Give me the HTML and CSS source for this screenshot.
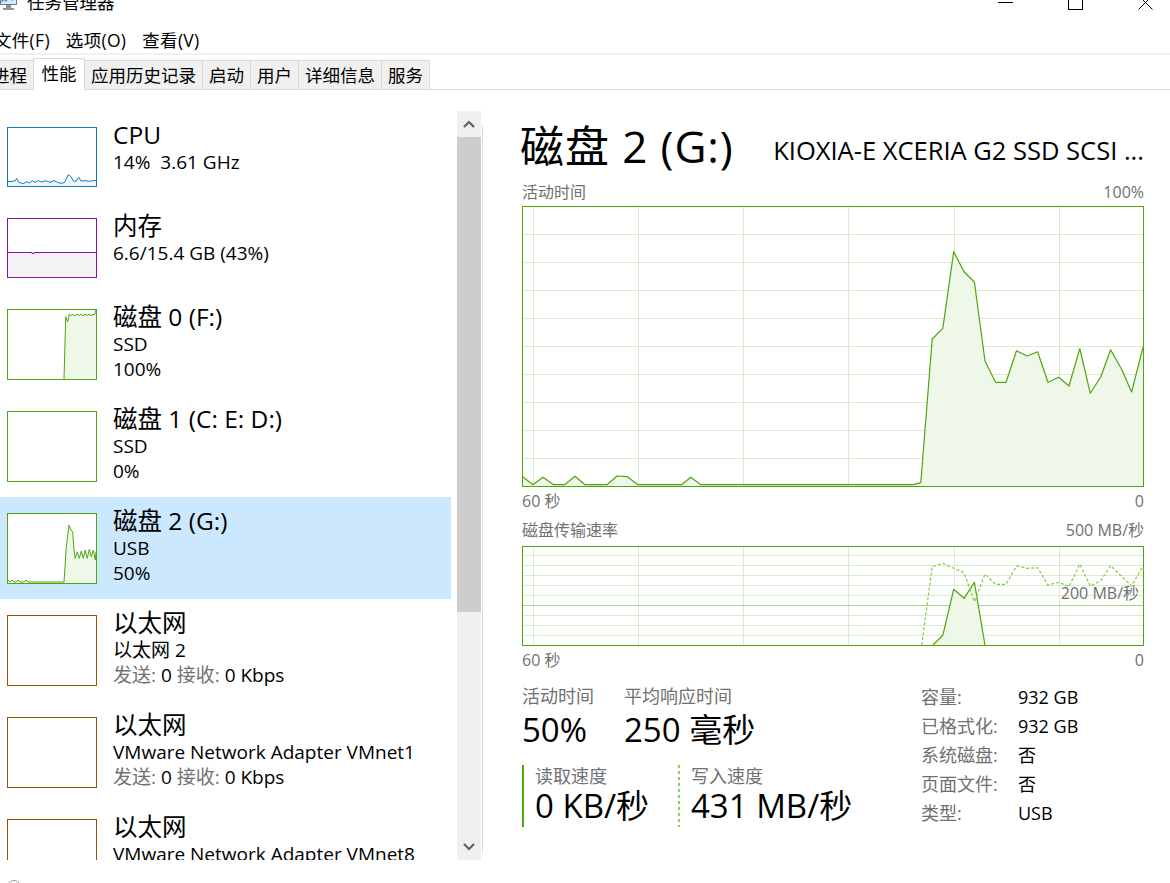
FILE: index.html
```html
<!DOCTYPE html>
<html lang="zh-CN">
<head>
<meta charset="utf-8">
<title>任务管理器</title>
<link rel="stylesheet" href="styles.css">
</head>
<body>
<div class="window">
  <header class="titlebar">
    <div class="app">
      <svg class="app-icon" width="20" height="20" viewBox="0 0 20 20">
        <rect x="1.5" y="1.5" width="16" height="11" fill="#dbe9f4" stroke="#6f7d88"/>
        <polyline points="2.5,10 5,7 7,9 10,4 13,8 16.5,5.5" fill="none" stroke="#2f86c8" stroke-width="1.2"/>
        <rect x="7" y="13" width="5" height="3" fill="#8a949c"/>
        <rect x="4" y="16" width="11" height="2" fill="#8a949c"/>
      </svg>
      <span class="app-name">任务管理器</span>
    </div>
    <div class="controls">
      <span class="ctl"><svg width="15" height="15" viewBox="0 0 15 15"><path d="M0 7.5H15" stroke="#000"/></svg></span>
      <span class="ctl"><svg width="15" height="15" viewBox="0 0 15 15"><rect x="0.5" y="0.5" width="14" height="14" fill="none" stroke="#000"/></svg></span>
      <span class="ctl"><svg width="15" height="15" viewBox="0 0 15 15"><path d="M0.5 0.5L14.5 14.5M14.5 0.5L0.5 14.5" stroke="#000"/></svg></span>
    </div>
  </header>

  <nav class="menubar">
    <span>文件(F)</span>
    <span>选项(O)</span>
    <span>查看(V)</span>
  </nav>

  <div class="tabs">
    <div class="tab">进程</div>
    <div class="tab active">性能</div>
    <div class="tab">应用历史记录</div>
    <div class="tab">启动</div>
    <div class="tab">用户</div>
    <div class="tab">详细信息</div>
    <div class="tab">服务</div>
  </div>

  <main class="perf">
    <aside class="sidebar">
      <div class="list">
        <div class="item short">
          <div class="thumb cpu">
            <svg viewBox="0 0 88 58" preserveAspectRatio="none">
              <path class="fill" d="M0,53.7 L7,53 8.7,50.3 10.7,54.3 15.3,55.7 18.7,53.7 21.3,55 24.3,52.7 27,54.3 30.3,52.7 33.7,54 37.7,52.7 42,54.3 46,52.7 52,55.3 56.3,54.7 60.3,46.7 63,48.7 65.3,53 68,53.3 70.7,49.3 73,53 77,52.7 81.3,53.3 88,52.3 L88,58 L0,58 Z"/>
              <polyline class="ln" points="0,53.7 7,53 8.7,50.3 10.7,54.3 15.3,55.7 18.7,53.7 21.3,55 24.3,52.7 27,54.3 30.3,52.7 33.7,54 37.7,52.7 42,54.3 46,52.7 52,55.3 56.3,54.7 60.3,46.7 63,48.7 65.3,53 68,53.3 70.7,49.3 73,53 77,52.7 81.3,53.3 88,52.3"/>
            </svg>
          </div>
          <div class="info">
            <div class="name">CPU</div>
            <div class="sub">14%&nbsp; 3.61 GHz</div>
          </div>
        </div>

        <div class="item short">
          <div class="thumb mem">
            <svg viewBox="0 0 88 58" preserveAspectRatio="none">
              <path class="fill" d="M0,33 L24,33 24,34 26,34 26,33 88,33 L88,58 L0,58 Z"/>
              <polyline class="ln" points="0,33.5 24,33.5 24,34.5 26,34.5 26,33.5 88,33.5"/>
            </svg>
          </div>
          <div class="info">
            <div class="name">内存</div>
            <div class="sub">6.6/15.4 GB (43%)</div>
          </div>
        </div>

        <div class="item">
          <div class="thumb disk">
            <svg viewBox="0 0 88 69" preserveAspectRatio="none">
              <path class="fill" d="M56,69 L57.7,6.7 59.7,11.7 61.3,4 63,5.5 65,4.5 67,6 69,4.2 71,5.5 73,4 75,5.8 77,4.3 79,5.5 81,4.2 83,5.6 85,4.5 86.5,5 88,0 L88,69 Z"/>
              <polyline class="ln" points="56,69 57.7,6.7 59.7,11.7 61.3,4 63,5.5 65,4.5 67,6 69,4.2 71,5.5 73,4 75,5.8 77,4.3 79,5.5 81,4.2 83,5.6 85,4.5 86.5,5 88,0"/>
            </svg>
          </div>
          <div class="info">
            <div class="name">磁盘 0 (F:)</div>
            <div class="sub">SSD</div>
            <div class="sub">100%</div>
          </div>
        </div>

        <div class="item">
          <div class="thumb disk"></div>
          <div class="info">
            <div class="name">磁盘 1 (C: E: D:)</div>
            <div class="sub">SSD</div>
            <div class="sub">0%</div>
          </div>
        </div>

        <div class="item selected">
          <div class="thumb disk">
            <svg viewBox="0 0 88 69" preserveAspectRatio="none">
              <path class="fill" d="M0,66 L2,68 4,66 6,68 8,68 10,66 12,68 16,68 18,66 20,68 56,68 L58.3,32.7 61,11 63,16 64.7,17.7 66,36 67.3,44.3 69.3,37.7 71.3,44.3 73.3,37 75.3,44.3 77.3,36 79.3,44.3 81.3,35.3 83.3,42.7 85.3,36 87.3,46 88,37.7 L88,69 L0,69 Z"/>
              <polyline class="ln" points="0,66 2,68 4,66 6,68 8,68 10,66 12,68 16,68 18,66 20,68 56,68 58.3,32.7 61,11 63,16 64.7,17.7 66,36 67.3,44.3 69.3,37.7 71.3,44.3 73.3,37 75.3,44.3 77.3,36 79.3,44.3 81.3,35.3 83.3,42.7 85.3,36 87.3,46 88,37.7"/>
            </svg>
          </div>
          <div class="info">
            <div class="name">磁盘 2 (G:)</div>
            <div class="sub">USB</div>
            <div class="sub">50%</div>
          </div>
        </div>

        <div class="item">
          <div class="thumb eth"></div>
          <div class="info">
            <div class="name">以太网</div>
            <div class="sub">以太网 2</div>
            <div class="sub"><span class="g">发送:</span> 0 <span class="g">接收:</span> 0 Kbps</div>
          </div>
        </div>

        <div class="item">
          <div class="thumb eth"></div>
          <div class="info">
            <div class="name">以太网</div>
            <div class="sub">VMware Network Adapter VMnet1</div>
            <div class="sub"><span class="g">发送:</span> 0 <span class="g">接收:</span> 0 Kbps</div>
          </div>
        </div>

        <div class="item">
          <div class="thumb eth"></div>
          <div class="info">
            <div class="name">以太网</div>
            <div class="sub">VMware Network Adapter VMnet8</div>
            <div class="sub"><span class="g">发送:</span> 0 <span class="g">接收:</span> 0 Kbps</div>
          </div>
        </div>
      </div>

      <div class="scrollbar">
        <div class="sb-btn"><svg width="12" height="8" viewBox="0 0 12 8"><polyline points="1,7 6,2 11,7" fill="none" stroke="#606060" stroke-width="2.2"/></svg></div>
        <div class="sb-thumb"></div>
        <div class="sb-track"></div>
        <div class="sb-btn"><svg width="12" height="8" viewBox="0 0 12 8"><polyline points="1,1 6,6 11,1" fill="none" stroke="#606060" stroke-width="2.2"/></svg></div>
      </div>
      <div class="splitter"></div>
    </aside>

    <section class="detail">
      <div class="head">
        <h1 class="title">磁盘 2 (G:)</h1>
        <div class="model">KIOXIA-E XCERIA G2 SSD SCSI ...</div>
      </div>

      <div class="cap"><span>活动时间</span><span>100%</span></div>
      <div class="chart big">
        <svg width="620" height="279" viewBox="0 0 620 279">
          <path class="grid" d="M10.5 0V279M115.5 0V279M220.5 0V279M325.5 0V279M431.5 0V279M536.5 0V279M0 27.5H620M0 55.5H620M0 83.5H620M0 111.5H620M0 139.5H620M0 167.5H620M0 195.5H620M0 223.5H620M0 251.5H620"/>
          <path class="fill" d="M0,270 L10,277.7 20,270.3 30.6,277.7 41.6,277.7 52,269.3 62,277.7 84,277.7 94,269 104.4,269.7 115,277.7 158.4,277.7 167.8,270.3 177.8,277.7 390,277.7 397.8,275.7 409.2,132 419.8,121.3 430.7,44.7 441,64.7 451.4,75 462,154 472.5,175.3 483,175.3 493.5,143.7 504,149 514.6,144.7 525,175.3 535.7,170.3 546,179 556.8,141.7 567.3,186.3 577.8,169.7 587.6,142.7 599,163 608.6,185 620,140.3 L620,279 L0,279 Z"/>
          <polyline class="ln" points="0,270 10,277.7 20,270.3 30.6,277.7 41.6,277.7 52,269.3 62,277.7 84,277.7 94,269 104.4,269.7 115,277.7 158.4,277.7 167.8,270.3 177.8,277.7 390,277.7 397.8,275.7 409.2,132 419.8,121.3 430.7,44.7 441,64.7 451.4,75 462,154 472.5,175.3 483,175.3 493.5,143.7 504,149 514.6,144.7 525,175.3 535.7,170.3 546,179 556.8,141.7 567.3,186.3 577.8,169.7 587.6,142.7 599,163 608.6,185 620,140.3"/>
        </svg>
      </div>
      <div class="axis"><span>60 秒</span><span>0</span></div>

      <div class="cap cap2"><span>磁盘传输速率</span><span>500 MB/秒</span></div>
      <div class="chart small">
        <svg width="620" height="98" viewBox="0 0 620 98">
          <path class="grid" d="M10.5 0V98M115.5 0V98M220.5 0V98M325.5 0V98M431.5 0V98M536.5 0V98M0 8.5H620M0 18.5H620M0 28.5H620M0 38.5H620M0 48.5H620M0 68.5H620M0 78.5H620M0 88.5H620"/>
          <path class="mark" d="M0 58.5H620"/>
          <path class="fill" d="M410,98 L419.8,88.3 430.7,42.3 441,51.3 451.4,35.3 462,98 Z"/>
          <polyline class="ln" points="410,98 419.8,88.3 430.7,42.3 441,51.3 451.4,35.3 462,98"/>
          <polyline class="dash" points="398.7,98 409.2,19.7 419.8,16.3 430.7,21.3 441,25.7 451.4,54.7 462,27 472.5,37.3 483,37.3 493.5,19 504,21.3 514.6,20.7 525,38 535.7,35.3 546,39.7 556.8,17 567.3,39 577.8,33.7 587.6,18.7 599,29.7 608.6,39 620,19"/>
        </svg>
        <span class="mark-label">200 MB/秒</span>
      </div>
      <div class="axis"><span>60 秒</span><span>0</span></div>

      <div class="stats">
        <div class="stats-left">
          <div class="kv-row">
            <div class="kv first"><div class="lbl">活动时间</div><div class="val">50%</div></div>
            <div class="kv"><div class="lbl">平均响应时间</div><div class="val">250 毫秒</div></div>
          </div>
          <div class="rw-row">
            <div class="rw read"><div class="lbl">读取速度</div><div class="val">0 KB/秒</div></div>
            <div class="rw write"><div class="lbl">写入速度</div><div class="val">431 MB/秒</div></div>
          </div>
        </div>
        <dl class="props">
          <dt>容量:</dt><dd>932 GB</dd>
          <dt>已格式化:</dt><dd>932 GB</dd>
          <dt>系统磁盘:</dt><dd>否</dd>
          <dt>页面文件:</dt><dd>否</dd>
          <dt>类型:</dt><dd>USB</dd>
        </dl>
      </div>
    </section>
  </main>

  <footer class="footer"><span class="fewer"></span></footer>
</div>
</body>
</html>
```

FILE: styles.css
```css
* { box-sizing: border-box; }
html, body { margin: 0; padding: 0; }
body {
  width: 1170px;
  height: 883px;
  overflow: hidden;
  background: #fff;
  color: #000;
  font-family: "Open Sans", "Noto Sans CJK SC", sans-serif;
}
.window { width: 1170px; }

/* title bar */
.titlebar {
  display: flex;
  align-items: center;
  justify-content: space-between;
  height: 30px;
  margin-top: -13px;
}
.app { display: flex; align-items: center; }
.app-icon { display: block; margin-left: -1px; }
.app-name { margin-left: 8px; font-size: 17.5px; line-height: 24px; }
.controls { display: flex; margin-right: -10px; }
.ctl {
  width: 70px;
  height: 30px;
  display: flex;
  align-items: center;
  justify-content: center;
}
.ctl svg { display: block; }

/* menu */
.menubar {
  display: flex;
  gap: 16px;
  padding: 11px 0 1px;
  margin-left: -6px;
  font-size: 17.5px;
  line-height: 24px;
  border-bottom: 2px solid #f0f0f0;
}
.menubar span { letter-spacing: 0.3px; }

/* tabs */
.tabs {
  display: flex;
  align-items: flex-end;
  height: 32px;
  margin-top: 3px;
  margin-left: -15px;
  border-bottom: 1px solid #d9d9d9;
  font-size: 17.5px;
}
.tab {
  height: 29px;
  padding: 0 6px;
  margin-left: -1px;
  line-height: 28px;
  background: #f0f0f0;
  border: 1px solid #d9d9d9;
  border-bottom: none;
  white-space: nowrap;
}
.tab:first-child { margin-left: 0; }
.tab.active {
  position: relative;
  z-index: 1;
  height: 32px;
  margin-bottom: -1px;
  padding: 0 7.5px;
  background: #fff;
}

/* main */
.perf { display: flex; padding-top: 21px; }
.sidebar { display: flex; flex: none; }
.list {
  width: 451px;
  height: 749px;
  overflow: hidden;
}
.item {
  display: flex;
  align-items: flex-start;
  height: 102px;
  padding-left: 7px;
}
.item.short { height: 91px; }
.item.selected { background: #cce8ff; }
.thumb {
  flex: none;
  width: 90px;
  height: 71px;
  margin-top: 16px;
  border: 1px solid #4da60c;
  background: #fff;
}
.item.short .thumb { height: 60px; }
.thumb svg { display: block; width: 100%; height: 100%; }
.thumb .ln { fill: none; stroke-width: 1; }
.thumb.cpu { border-color: #117dbb; }
.thumb.cpu .ln { stroke: #117dbb; }
.thumb.cpu .fill { fill: #f1f6fa; }
.thumb.mem { border-color: #8b12ae; }
.thumb.mem .ln { stroke: #8b12ae; }
.thumb.mem .fill { fill: #f4f2f4; }
.thumb.disk .ln { stroke: #4da60c; }
.thumb.disk .fill { fill: #eff7e9; }
.thumb.eth { border-color: #a74f01; }

.info { margin-left: 16px; padding-top: 9px; white-space: nowrap; }
.name { font-size: 24.5px; line-height: 30px; }
.sub { font-size: 19px; line-height: 24.5px; }
.g { color: #707070; }

.scrollbar {
  display: flex;
  flex-direction: column;
  width: 24px;
  height: 749px;
  margin-left: 6px;
  background: #f0f0f0;
}
.sb-btn {
  height: 26px;
  display: flex;
  align-items: center;
  justify-content: center;
}
.sb-btn svg { display: block; }
.sb-thumb { height: 475px; background: #cdcdcd; }
.sb-track { flex: 1; }
.splitter {
  width: 1px;
  height: 728px;
  margin: 14px 0 0 1px;
  background: #dcdcdc;
}

/* detail */
.detail {
  width: 622px;
  margin-left: 39px;
  padding-top: 10px;
}
.head {
  display: flex;
  justify-content: space-between;
  align-items: flex-start;
  height: 50px;
}
.title {
  margin: 0 0 0 -2px;
  font-size: 44px;
  font-weight: normal;
  line-height: 50px;
  letter-spacing: 0.9px;
  white-space: nowrap;
}
.model {
  padding-top: 14px;
  font-size: 25.5px;
  line-height: 30px;
  white-space: nowrap;
}
.cap, .axis {
  display: flex;
  justify-content: space-between;
  font-size: 16px;
  line-height: 22px;
  color: #707070;
}
.cap { margin-top: 10px; }
.cap2 { margin-top: 7px; }
.axis { margin-top: 3px; }
.chart {
  position: relative;
  width: 622px;
  border: 1px solid #4da60c;
  margin-top: 3px;
}
.chart.big { height: 281px; }
.chart.small { height: 100px; margin-top: 5px; }
.chart svg { display: block; }
.chart .grid { fill: none; stroke: #d9ecca; stroke-width: 1; }
.chart .mark { fill: none; stroke: #a9d58c; stroke-width: 1; }
.chart .fill { fill: #eef7e8; }
.chart .ln { fill: none; stroke: #4da60c; stroke-width: 1.2; stroke-linejoin: round; }
.chart .dash { fill: none; stroke: #86c93f; stroke-width: 1.2; stroke-dasharray: 3 2; }
.mark-label {
  position: absolute;
  right: 4px;
  top: 35px;
  font-size: 16px;
  line-height: 22px;
  color: #707070;
}

.stats {
  display: flex;
  align-items: flex-start;
  margin-top: 13px;
}
.stats-left { width: 399px; flex: none; }
.kv-row, .rw-row { display: flex; }
.kv.first { width: 102px; }
.lbl { font-size: 18px; line-height: 24px; color: #707070; white-space: nowrap; }
.val { font-size: 33px; line-height: 38px; white-space: nowrap; }
.kv .val { margin-top: 2.6px; }
.rw-row { margin-top: 16.4px; }
.rw {
  position: relative;
  padding: 0 0 2px 11px;
}
.rw .lbl { line-height: 22px; }
.rw .val { line-height: 38px; }
.rw.read { width: 156px; border-left: 2px solid #4da60c; }
.rw.write { padding-left: 13px; }
.rw.write::before {
  content: "";
  position: absolute;
  left: 0;
  top: 0;
  bottom: 0;
  width: 2px;
  background: repeating-linear-gradient(to bottom, #8fd14f 0 3px, transparent 3px 6px);
}

.props {
  display: grid;
  grid-template-columns: 97px auto;
  margin: -1.5px 0 0;
  font-size: 18px;
  line-height: 29px;
}
.props dt { color: #707070; white-space: nowrap; }
.props dd { margin: 0; white-space: nowrap; }

/* footer */
.footer { padding: 20px 0 0 7px; }
.fewer {
  display: block;
  width: 14px;
  height: 14px;
  border: 1px solid #9a9a9a;
  border-radius: 50%;
}
```
